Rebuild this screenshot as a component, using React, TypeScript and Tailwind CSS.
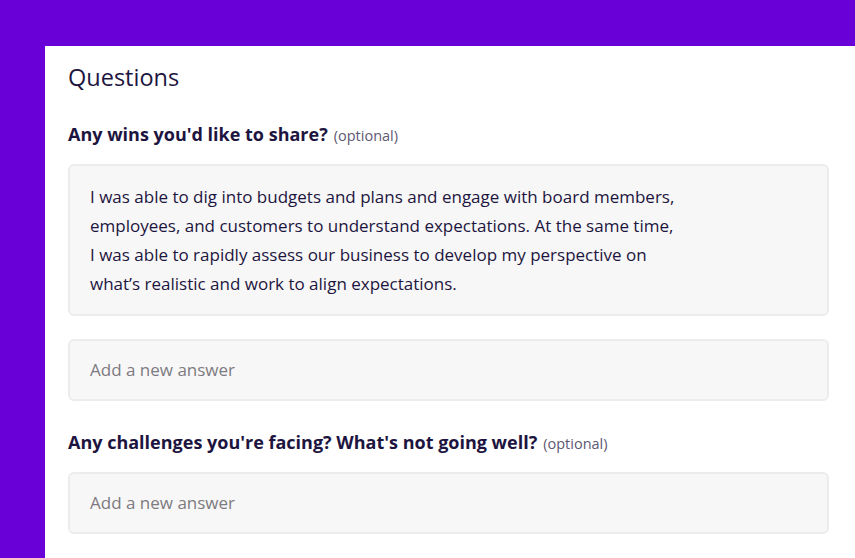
import React from 'react';

const QuestionLabel: React.FC<{ text: string }> = ({ text }) => (
  <h3 className="flex items-baseline gap-[6px] text-[18px] leading-[24px] font-bold text-[#1d1540]">
    {text}
    <span className="text-[14.5px] font-normal text-[#5e5873]">(optional)</span>
  </h3>
);

const AnswerBox: React.FC<{ children?: React.ReactNode; placeholder?: string }> = ({ children, placeholder }) => (
  <div className="rounded-[6px] border-2 border-[#ececec] bg-[#f7f7f7] px-[20px]">
    {children ? (
      <p className="py-[16px] text-[17px] leading-[29px] text-[#1d1540]">{children}</p>
    ) : (
      <p className="py-[15px] text-[17px] leading-[28px] text-[#7d7a80]">{placeholder}</p>
    )}
  </div>
);

const App: React.FC = () => {
  return (
    <div className="h-[558px] w-[855px] overflow-hidden bg-[#6a00d8] pl-[45px] pt-[46px]" style={{ fontFamily: '"Open Sans", sans-serif' }}>
      <div className="h-full bg-white pl-[23px] pr-[26px] pt-[15px]">
        <h2 className="text-[23.5px] leading-[32px] text-[#1d1540]">Questions</h2>

        <div className="mt-[29px]">
          <QuestionLabel text="Any wins you'd like to share?" />
        </div>
        <div className="mt-[16px]">
          <AnswerBox>
            I was able to dig into budgets and plans and engage with board members,
            <br />
            employees, and customers to understand expectations. At the same time,
            <br />
            I was able to rapidly assess our business to develop my perspective on
            <br />
            what’s realistic and work to align expectations.
          </AnswerBox>
        </div>
        <div className="mt-[23px]">
          <AnswerBox placeholder="Add a new answer" />
        </div>

        <div className="mt-[29px]">
          <QuestionLabel text="Any challenges you're facing? What's not going well?" />
        </div>
        <div className="mt-[16px]">
          <AnswerBox placeholder="Add a new answer" />
        </div>
      </div>
    </div>
  );
};

export default App;
